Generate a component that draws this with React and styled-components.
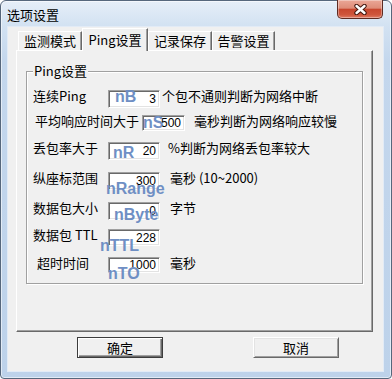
import React from 'react';
import styled, { createGlobalStyle } from 'styled-components';

const Global = createGlobalStyle`
  html, body { margin: 0; padding: 0; background: #ffffff; }
  body { width: 392px; height: 379px; overflow: hidden; }
`;

const CJK = `"Noto Sans CJK SC", "Noto Sans", sans-serif`;

const Window = styled.div`
  box-sizing: border-box;
  width: 392px;
  height: 379px;
  display: flex;
  flex-direction: column;
  border: 1px solid #56677c;
  border-radius: 6px 6px 4px 4px;
  background: linear-gradient(#e6eef8 0px, #d3e2f2 24px, #c4d7ed 60px, #bdd2ea 100%);
  box-shadow: inset 0 0 0 1px rgba(255, 255, 255, 0.55);
  padding: 0 8px 7px 7px;
  font-family: ${CJK};
  font-size: 13px;
  color: #000;
`;

const TitleBar = styled.div`
  height: 26px;
  display: flex;
  justify-content: space-between;
  align-items: flex-start;
`;

const Title = styled.div`
  margin: 6px 0 0 -1px;
  line-height: 16px;
  font-size: 13px;
`;

const CloseBtn = styled.div`
  box-sizing: border-box;
  width: 46px;
  height: 19px;
  margin-top: -1px;
  border: 1px solid #5e2b22;
  border-top: none;
  border-radius: 0 0 5px 5px;
  background: linear-gradient(#eaa797 0%, #de8c78 45%, #c8472f 52%, #cf563c 82%, #df7d66 100%);
  box-shadow: inset 0 0 0 1px rgba(255, 255, 255, 0.35);
  display: flex;
  align-items: center;
  justify-content: center;
`;

const Client = styled.div`
  flex: 1;
  background: #f0f0f0;
  box-shadow: 0 0 0 1px #e2ebf6;
  display: flex;
  flex-direction: column;
  padding: 1px 10px 0 8px;
`;

const TabStrip = styled.div`
  height: 22px;
  display: flex;
  align-items: flex-end;
  padding-left: 2px;
  position: relative;
  z-index: 1;
`;

const Tab = styled.div`
  box-sizing: border-box;
  width: ${p => p.$w}px;
  height: ${p => (p.$active ? 23 : 19)}px;
  margin-bottom: ${p => (p.$active ? -1 : 0)}px;
  background: #f0f0f0;
  border-top: 1px solid #ffffff;
  border-left: 1px solid #ffffff;
  border-right: 1px solid #696969;
  box-shadow: inset -1px 0 0 #a0a0a0;
  display: flex;
  justify-content: center;
  padding-top: ${p => (p.$active ? 3 : 1)}px;
  line-height: 16px;
  white-space: nowrap;
`;

const Panel = styled.div`
  box-sizing: border-box;
  width: 357px;
  height: 282px;
  border-top: 1px solid #ffffff;
  border-left: 1px solid #ffffff;
  border-right: 1px solid #696969;
  border-bottom: 1px solid #696969;
  box-shadow: inset -1px -1px 0 #a0a0a0;
  padding: 20px 0 0 9px;
`;

const Group = styled.div`
  position: relative;
  box-sizing: border-box;
  width: 337px;
  height: 213px;
  border: 1px solid #a0a0a0;
  box-shadow: 1px 1px 0 #ffffff, inset 1px 1px 0 #ffffff;
  padding-top: 18px;
`;

const Legend = styled.span`
  position: absolute;
  left: 6px;
  top: -9px;
  padding: 0 1px;
  background: #f0f0f0;
  line-height: 16px;
`;

const Row = styled.div`
  height: ${p => p.$h}px;
  display: flex;
  align-items: flex-start;
`;

const Label = styled.span`
  margin: -2px 0 0 ${p => p.$ml}px;
  width: ${p => p.$w}px;
  line-height: 16px;
  white-space: nowrap;
  flex: none;
`;

const EditWrap = styled.div`
  position: relative;
  flex: none;
`;

const Edit = styled.input`
  box-sizing: border-box;
  display: block;
  width: ${p => p.$w}px;
  height: ${p => p.$h}px;
  margin: 0;
  padding: 0 3px 0 0;
  border-style: solid;
  border-width: 1px;
  border-color: #a0a0a0 #ffffff #ffffff #a0a0a0;
  box-shadow: inset 1px 1px 0 #696969, inset -1px -1px 0 #e3e3e3;
  background: #ffffff;
  font-family: "Liberation Sans", Arial, sans-serif;
  font-size: 12px;
  color: #000;
  text-align: right;
  outline: none;
`;

const Tag = styled.span`
  position: absolute;
  left: ${p => p.$x}px;
  top: ${p => p.$y}px;
  font-family: "Liberation Sans", Arial, sans-serif;
  font-weight: bold;
  font-size: 16px;
  line-height: 16px;
  color: #6f8fc4;
  pointer-events: none;
  white-space: nowrap;
`;

const Suffix = styled.span`
  margin: -2px 0 0 ${p => p.$ml}px;
  line-height: 16px;
  white-space: nowrap;
`;

const ButtonRow = styled.div`
  display: flex;
  gap: 90px;
  padding-left: 61px;
  margin-top: 5px;
`;

const Button = styled.button`
  box-sizing: border-box;
  width: 86px;
  height: 21px;
  margin: 0;
  padding: 0;
  font-family: ${CJK};
  font-size: 13px;
  line-height: 16px;
  color: #000;
  background: #f0f0f0;
  border-style: solid;
  border-width: 1px;
  border-color: ${p => (p.$default ? '#3c3c3c' : '#ffffff #696969 #696969 #ffffff')};
  box-shadow: ${p =>
    p.$default
      ? 'inset 1px 1px 0 #ffffff, inset -1px -1px 0 #696969, inset -2px -2px 0 #a0a0a0'
      : 'inset 1px 1px 0 #e3e3e3, inset -1px -1px 0 #a0a0a0'};
`;

const tabs = [
  { text: '监测模式', w: 64 },
  { text: 'Ping设置', w: 66, active: true },
  { text: '记录保存', w: 64 },
  { text: '告警设置', w: 63 },
];

const base = { lx: 33, ix: 108, iw: 52, ih: 18 };
const rows = [
  { ...base, label: '连续Ping', h: 25, value: '3', tag: 'nB', tx: 7, ty: -1, suffix: '个包不通则判断为网络中断', sx: 162 },
  { ...base, label: '平均响应时间大于', lx: 35, ix: 142, iw: 43, ih: 16, h: 27, value: '500', tag: 'nS', tx: 1, ty: 0, suffix: '毫秒判断为网络响应较慢', sx: 194 },
  { ...base, label: '丢包率大于', h: 30, value: '20', tag: 'nR', tx: 5, ty: 3, suffix: '%判断为网络丢包率较大', sx: 168 },
  { ...base, label: '纵座标范围', h: 30, value: '300', tag: 'nRange', tx: -2, ty: 9, suffix: '毫秒 (10~2000)', sx: 170 },
  { ...base, label: '数据包大小', h: 27, value: '0', tag: 'nByte', tx: 6, ty: 5, suffix: '字节', sx: 170 },
  { ...base, label: '数据包 TTL', h: 28, ih: 17, value: '228', tag: 'nTTL', tx: -8, ty: 9 },
  { ...base, label: '超时时间', lx: 37, h: 24, ih: 16, value: '1000', tag: 'nTO', tx: 0, ty: 9, suffix: '毫秒', sx: 170 },
];

const CloseIcon = () => (
  <svg width="13" height="11" viewBox="0 0 13 11">
    <path d="M2.5 2 L10.5 9 M10.5 2 L2.5 9" stroke="#43170f" strokeWidth="4.4" strokeLinecap="round" fill="none" />
    <path d="M2.5 2 L10.5 9 M10.5 2 L2.5 9" stroke="#ffffff" strokeWidth="2.4" strokeLinecap="round" fill="none" />
  </svg>
);

export default function App() {
  return (
    <>
      <Global />
      <Window>
        <TitleBar>
          <Title>选项设置</Title>
          <CloseBtn>
            <CloseIcon />
          </CloseBtn>
        </TitleBar>
        <Client>
          <TabStrip>
            {tabs.map(t => (
              <Tab key={t.text} $w={t.w} $active={t.active}>
                {t.text}
              </Tab>
            ))}
          </TabStrip>
          <Panel>
            <Group>
              <Legend>Ping设置</Legend>
              {rows.map(r => (
                <Row key={r.tag} $h={r.h}>
                  <Label $ml={r.lx - 27} $w={r.ix - r.lx}>
                    {r.label}
                  </Label>
                  <EditWrap>
                    <Edit $w={r.iw} $h={r.ih} value={r.value} readOnly />
                    <Tag $x={r.tx} $y={r.ty}>
                      {r.tag}
                    </Tag>
                  </EditWrap>
                  {r.suffix && <Suffix $ml={r.sx - (r.ix + r.iw)}>{r.suffix}</Suffix>}
                </Row>
              ))}
            </Group>
          </Panel>
          <ButtonRow>
            <Button $default>确定</Button>
            <Button>取消</Button>
          </ButtonRow>
        </Client>
      </Window>
    </>
  );
}
